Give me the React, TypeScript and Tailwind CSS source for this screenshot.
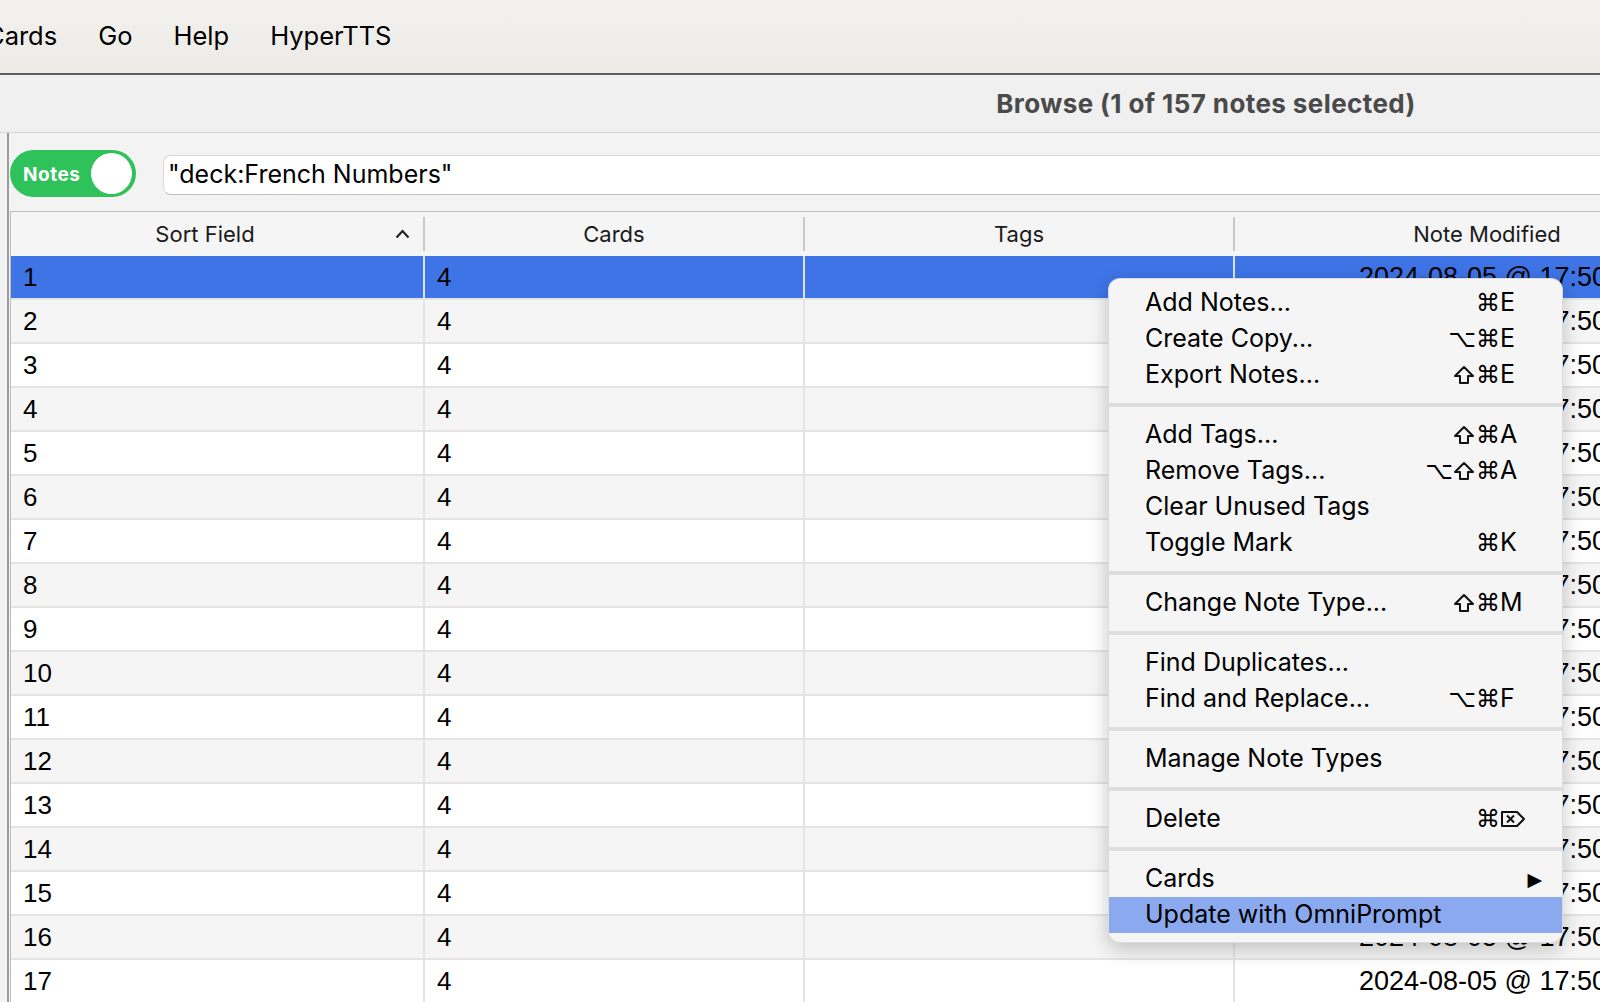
import React from 'react';

const ROWS = Array.from({ length: 17 }, (_, i) => i + 1);

type MenuEntry =
  | { kind: 'item'; label: string; mods?: string; key?: string; arrow?: boolean; active?: boolean }
  | { kind: 'sep' };

const MENU: MenuEntry[] = [
  { kind: 'item', label: 'Add Notes...', mods: '⌘', key: 'E' },
  { kind: 'item', label: 'Create Copy...', mods: '⌥⌘', key: 'E' },
  { kind: 'item', label: 'Export Notes...', mods: '⇧⌘', key: 'E' },
  { kind: 'sep' },
  { kind: 'item', label: 'Add Tags...', mods: '⇧⌘', key: 'A' },
  { kind: 'item', label: 'Remove Tags...', mods: '⌥⇧⌘', key: 'A' },
  { kind: 'item', label: 'Clear Unused Tags' },
  { kind: 'item', label: 'Toggle Mark', mods: '⌘', key: 'K' },
  { kind: 'sep' },
  { kind: 'item', label: 'Change Note Type...', mods: '⇧⌘', key: 'M' },
  { kind: 'sep' },
  { kind: 'item', label: 'Find Duplicates...' },
  { kind: 'item', label: 'Find and Replace...', mods: '⌥⌘', key: 'F' },
  { kind: 'sep' },
  { kind: 'item', label: 'Manage Note Types' },
  { kind: 'sep' },
  { kind: 'item', label: 'Delete', mods: '⌘', key: 'del' },
  { kind: 'sep' },
  { kind: 'item', label: 'Cards', arrow: true },
  { kind: 'item', label: 'Update with OmniPrompt', active: true },
];

// outline shift arrow, drawn because the fonts here render ⇧ too thin
function ShiftIcon() {
  return (
    <svg width="22" height="20" viewBox="0 0 22 20" className="mr-[1px]">
      <path d="M11 2 L20 11 H15 V18 H7 V11 H2 Z" fill="none" stroke="#111" strokeWidth="2" strokeLinejoin="round" />
    </svg>
  );
}

function DeleteIcon() {
  return (
    <svg width="26" height="18" viewBox="0 0 26 18">
      <path d="M2 2 H17 L24 9 L17 16 H2 Z" fill="none" stroke="#111" strokeWidth="2" strokeLinejoin="round" />
      <path d="M7 5.5 L14 12.5 M14 5.5 L7 12.5" stroke="#111" strokeWidth="2" />
    </svg>
  );
}

function Mods({ mods }: { mods: string }) {
  return (
    <span className="flex items-center justify-end">
      {mods.split('').map((c, i) =>
        c === '⇧' ? (
          <ShiftIcon key={i} />
        ) : (
          <span key={i} className="font-['DejaVu_Sans',sans-serif] text-[24px] leading-none">
            {c}
          </span>
        )
      )}
    </span>
  );
}

function MenuBar() {
  return (
    <div className="h-[75px] border-b-2 border-[#5e5e5e] bg-gradient-to-b from-[#f2f1ed] to-[#ecebe7] flex items-center gap-[41px] font-['Inter',sans-serif] text-[25.5px] text-black">
      <span className="ml-[-14px]">Cards</span>
      <span>Go</span>
      <span>Help</span>
      <span>HyperTTS</span>
    </div>
  );
}

function ContextMenu() {
  return (
    <div className="absolute left-[1108px] top-[278px] w-[455px] rounded-[12px] bg-[#f5f5f5] border border-black/10 shadow-[0_6px_20px_rgba(0,0,0,0.22)] pt-[6px] pb-[9px] font-['Inter',sans-serif] text-[25px] text-black">
      {MENU.map((m, i) =>
        m.kind === 'sep' ? (
          <div key={i} className="h-[24px] flex items-center">
            <div className="h-[4px] w-full bg-[#dedede]" />
          </div>
        ) : (
          <div
            key={i}
            className={`h-[36px] flex items-center pl-[36px] pr-[32px] ${m.active ? 'bg-[#8aa9ee]' : ''}`}
          >
            <span className="flex-1 whitespace-nowrap">{m.label}</span>
            {m.key && (
              <span className="flex items-center">
                {m.mods && <Mods mods={m.mods} />}
                <span className="w-[30px] flex items-center">
                  {m.key === 'del' ? <DeleteIcon /> : m.key}
                </span>
              </span>
            )}
            {m.arrow && <span className="mr-[-12px] font-['DejaVu_Sans',sans-serif] text-[19px]">▶</span>}
          </div>
        )
      )}
    </div>
  );
}

function Toolbar() {
  return (
    <div className="h-[78px] flex items-start gap-[27px] pl-[1px]">
      <div className="mt-[17px] w-[126px] h-[47px] rounded-full bg-[#2fc25a] flex items-center justify-between pl-[13px] pr-[4px]">
        <span className="font-['Inter',sans-serif] font-bold text-[19px] tracking-[0.5px] text-white mt-[4px]">Notes</span>
        <span className="w-[41px] h-[41px] rounded-full bg-white" />
      </div>
      <div className="mt-[22px] flex-1 h-[40px] rounded-l-[8px] bg-white border border-[#d8d8d8] border-b-[#bfbfbf] flex items-center pl-[4px] font-['Inter',sans-serif] text-[25px] text-black">
        "deck:French Numbers"
      </div>
    </div>
  );
}

function HeaderRow() {
  return (
    <div className="h-[44px] flex items-center bg-[#f5f5f5] font-['Inter',sans-serif] text-[22px] text-[#1a1a1a]">
      <div className="w-[412px] relative flex justify-center pr-[24px]">
        <span>Sort Field</span>
        <svg className="absolute right-[13px] top-1/2 -translate-y-1/2" width="15" height="10" viewBox="0 0 15 10">
          <polyline points="1.5,8.5 7.5,2 13.5,8.5" fill="none" stroke="#222" strokeWidth="2.2" />
        </svg>
      </div>
      <div className="w-[2px] h-[34px] bg-[#c9c9c9]" />
      <div className="w-[378px] text-center">Cards</div>
      <div className="w-[2px] h-[34px] bg-[#c9c9c9]" />
      <div className="w-[428px] text-center">Tags</div>
      <div className="w-[2px] h-[34px] bg-[#c9c9c9]" />
      <div className="w-[504px] text-center">Note Modified</div>
    </div>
  );
}

function BodyRow({ n }: { n: number }) {
  const selected = n === 1;
  const bg = selected ? 'bg-[#3e74e6]' : n % 2 === 0 ? 'bg-[#f5f5f5]' : 'bg-white';
  const line = selected ? 'bg-[#dbe3f6]' : 'bg-[#e4e4e4]';
  return (
    <div className={`h-[44px] flex border-b-2 border-[#e4e4e4] ${bg} font-['Liberation_Sans',Arial,sans-serif] text-[26px] text-black`}>
      <div className="w-[412px] pl-[12px] flex items-center">{n}</div>
      <div className={`w-[2px] ${line}`} />
      <div className="w-[378px] pl-[12px] flex items-center">4</div>
      <div className={`w-[2px] ${line}`} />
      <div className="w-[428px]" />
      <div className={`w-[2px] ${line}`} />
      <div className="w-[504px] pl-[124px] flex items-center whitespace-nowrap text-[27px]">2024-08-05 @ 17:50</div>
    </div>
  );
}

export default function App() {
  return (
    <div className="relative w-[1600px] h-[1002px] overflow-hidden bg-[#f3f3f3]">
      <MenuBar />
      <div className="h-[58px] border-b border-[#d6d6d6] bg-[#f0f0f0] flex items-center">
        <div className="w-[2412px] shrink-0 text-center font-['Inter',sans-serif] font-bold text-[26px] tracking-[0.4px] text-[#4a4a4a]">
          Browse (1 of 157 notes selected)
        </div>
      </div>
      <div className="flex">
        <div className="w-[7px] shrink-0" />
        <div className="w-[2000px] shrink-0 border-l-2 border-[#9c9c9c]">
          <Toolbar />
          <div className="ml-[1px] border-t border-l border-[#bdbdbd]">
            <HeaderRow />
            {ROWS.map((n) => (
              <BodyRow key={n} n={n} />
            ))}
          </div>
        </div>
      </div>
      <ContextMenu />
    </div>
  );
}
